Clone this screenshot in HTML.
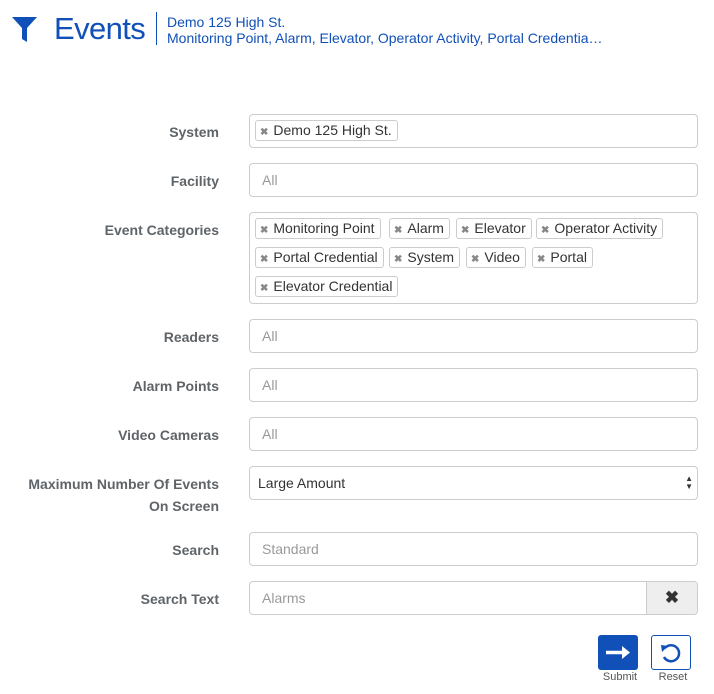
<!DOCTYPE html>
<html><head><style>
body{margin:0;width:714px;height:694px;background:#fff;font-family:"Liberation Sans",Arial,sans-serif;position:relative;overflow:hidden}
.a{position:absolute}
.lbl{position:absolute;right:495px;font-weight:bold;font-size:14px;color:#5f6468;text-align:right;line-height:22px}
.in{position:absolute;left:249px;width:447px;height:32px;border:1px solid #ccc;border-radius:4px;background:#fff;font-size:14px;color:#999;box-sizing:content-box}
.in span.p{position:absolute;left:12px;top:8px}
.tag{position:absolute;height:19px;border:1px solid #ccc;border-radius:3px;font-size:14px;color:#333;line-height:19px;padding:0 5px 0 4px;white-space:nowrap;background:#fff}
.tag b{color:#888;font-size:10px;margin-right:5px;font-weight:bold}
</style></head><body>
<svg class="a" style="left:12px;top:17px" width="25" height="26" viewBox="0 0 25 26"><path d="M0 0H25L15 11V25L10 22V11Z" fill="#1150b8"/></svg>
<div class="a" style="left:54px;top:11px;font-size:31px;letter-spacing:-0.6px;color:#1150b8;font-family:'Liberation Sans',sans-serif">Events</div>
<div class="a" style="left:156px;top:12px;width:1px;height:33px;background:#1150b8"></div>
<div class="a" style="left:167px;top:14px;font-size:14px;color:#1150b8;line-height:16px">Demo 125 High St.<br>Monitoring Point, Alarm, Elevator, Operator Activity, Portal Credentia…</div>

<div class="lbl" style="top:121px">System</div>
<div class="in" style="top:114px"><div class="tag" style="left:5px;top:5px"><b>✖</b>Demo 125 High St.</div></div>

<div class="lbl" style="top:170px">Facility</div>
<div class="in" style="top:163px"><span class="p">All</span></div>

<div class="lbl" style="top:219px">Event Categories</div>
<div class="in" style="top:212px;height:90px">
<div class="tag" style="left:5px;top:5px"><b>✖</b>Monitoring Point</div>
<div class="tag" style="left:139px;top:5px"><b>✖</b>Alarm</div>
<div class="tag" style="left:206px;top:5px"><b>✖</b>Elevator</div>
<div class="tag" style="left:286px;top:5px"><b>✖</b>Operator Activity</div>
<div class="tag" style="left:5px;top:34px"><b>✖</b>Portal Credential</div>
<div class="tag" style="left:139px;top:34px"><b>✖</b>System</div>
<div class="tag" style="left:216px;top:34px"><b>✖</b>Video</div>
<div class="tag" style="left:282px;top:34px"><b>✖</b>Portal</div>
<div class="tag" style="left:5px;top:63px"><b>✖</b>Elevator Credential</div>
</div>

<div class="lbl" style="top:326px">Readers</div>
<div class="in" style="top:319px"><span class="p">All</span></div>
<div class="lbl" style="top:375px">Alarm Points</div>
<div class="in" style="top:368px"><span class="p">All</span></div>
<div class="lbl" style="top:424px">Video Cameras</div>
<div class="in" style="top:417px"><span class="p">All</span></div>

<div class="lbl" style="top:473px">Maximum Number Of Events<br>On Screen</div>
<div class="in" style="top:466px;color:#333"><span class="p" style="left:8px">Large Amount</span><span style="position:absolute;right:4px;top:8px;font-size:8px;line-height:8px;color:#333">▲<br>▼</span></div>

<div class="lbl" style="top:539px">Search</div>
<div class="in" style="top:532px"><span class="p">Standard</span></div>
<div class="lbl" style="top:588px">Search Text</div>
<div class="in" style="top:581px"><span class="p">Alarms</span><div style="position:absolute;right:0;top:0;width:50px;height:32px;background:#eee;border-left:1px solid #ccc;border-radius:0 4px 4px 0;text-align:center;line-height:32px;color:#333;font-size:17px;font-weight:bold">✖</div></div>

<div class="a" style="left:598px;top:635px;width:40px;height:35px;background:#1150b8;border-radius:3px">
<svg width="40" height="35"><path d="M8 17.5H27" stroke="#fff" stroke-width="3.5"/><path d="M24 11L32 17.5L24 24Z" fill="#fff"/></svg></div>
<div class="a" style="left:651px;top:635px;width:38px;height:33px;border:1px solid #1150b8;border-radius:3px">
<svg width="38" height="33"><path d="M13 12A8 8 0 1 1 12 21" fill="none" stroke="#1150b8" stroke-width="2.5"/><path d="M9 9L16 10L10 16Z" fill="#1150b8"/></svg></div>
<div class="a" style="left:598px;top:671px;width:44px;text-align:center;font-size:11px;color:#555">Submit</div>
<div class="a" style="left:651px;top:671px;width:44px;text-align:center;font-size:11px;color:#555">Reset</div>
</body></html>
